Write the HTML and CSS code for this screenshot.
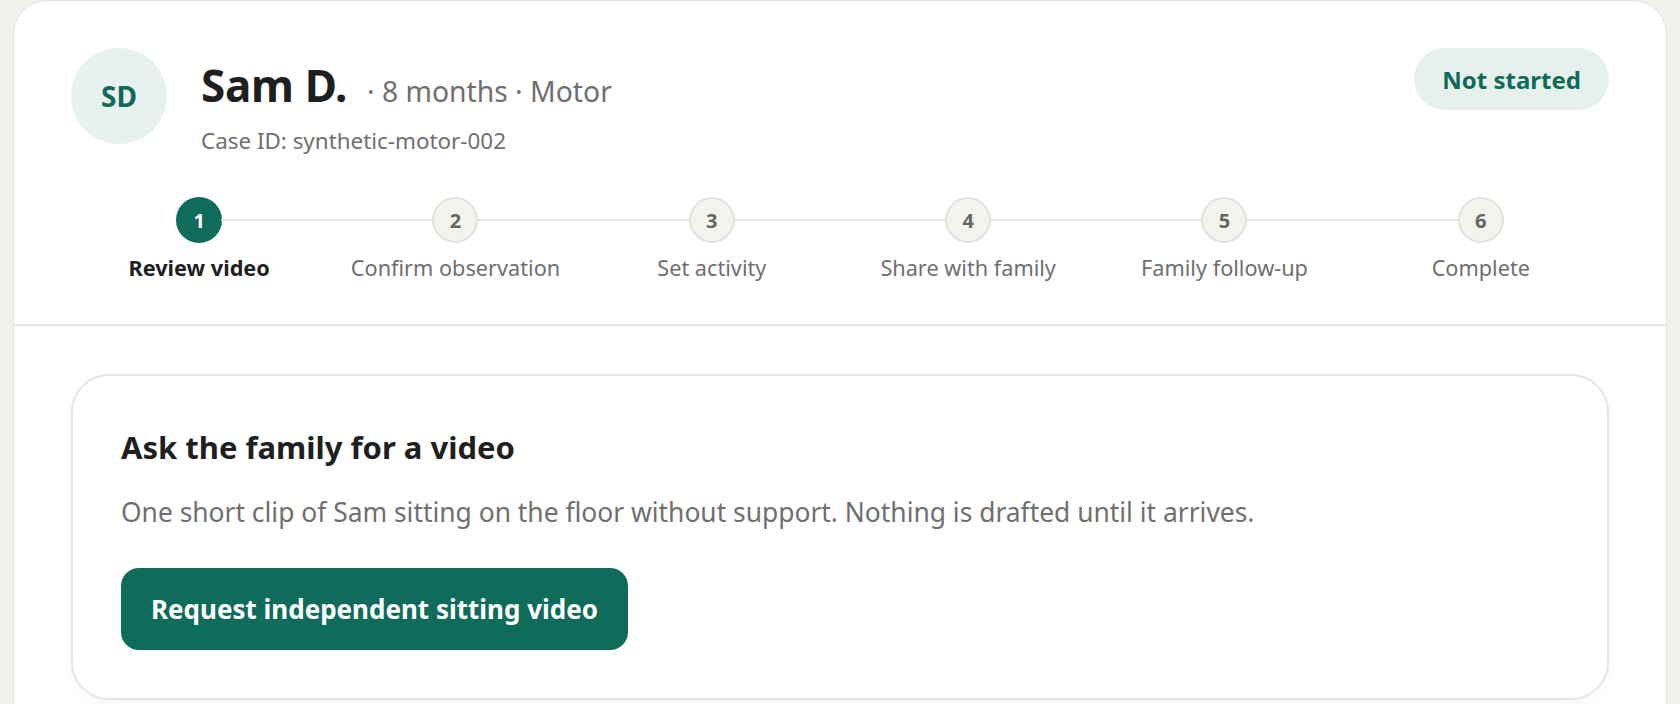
FILE: index.html
```html
<!DOCTYPE html>
<html lang="en">
<head>
  <meta charset="UTF-8">
  <meta name="viewport" content="width=device-width, initial-scale=1.0">
  <title>Sam D. - Case</title>
  <link rel="stylesheet" href="styles.css">
</head>
<body>

<div class="page">
  <div class="case-card">

    <!-- Case header -->
    <div class="case-head">
      <div class="head-row">
        <div class="who">
          <div class="avatar">SD</div>
          <div class="title-block">
            <div class="name-line">
              <h1 class="name">Sam D.</h1>
              <span class="meta">· 8 months · Motor</span>
            </div>
            <div class="case-id">Case ID: synthetic-motor-002</div>
          </div>
        </div>
        <div class="status-pill">Not started</div>
      </div>

      <!-- Steps -->
      <ol class="stepper">
        <li class="step active"><span class="dot">1</span><span class="label">Review video</span></li>
        <li class="step"><span class="dot">2</span><span class="label">Confirm observation</span></li>
        <li class="step"><span class="dot">3</span><span class="label">Set activity</span></li>
        <li class="step"><span class="dot">4</span><span class="label">Share with family</span></li>
        <li class="step"><span class="dot">5</span><span class="label">Family follow-up</span></li>
        <li class="step"><span class="dot">6</span><span class="label">Complete</span></li>
      </ol>
    </div>

    <!-- Current task -->
    <div class="case-body">
      <div class="task-card">
        <h2>Ask the family for a video</h2>
        <p>One short clip of Sam sitting on the floor without support. Nothing is drafted until it arrives.</p>
        <button class="primary">Request independent sitting video</button>
      </div>
    </div>

  </div>
</div>

</body>
</html>
```

FILE: styles.css
```css
body {
  font-family: "Noto Sans", "Open Sans", Arial, sans-serif;
  margin: 0;
  padding: 0;
  background: #f3f1ec;
  color: #1f1f1f;
}

.page {
  padding: 0 13px;
}

.case-card {
  background: #ffffff;
  border: 1px solid #e4e2dd;
  border-radius: 34px 34px 0 0;
  overflow: hidden;
  height: 760px;
}

.case-head {
  padding: 47px 57px 0;
  border-bottom: 2px solid #e8e7e4;
}

.head-row {
  display: flex;
  justify-content: space-between;
  align-items: flex-start;
}

.who {
  display: flex;
  align-items: flex-start;
  gap: 34px;
}

.avatar {
  width: 96px;
  height: 96px;
  border-radius: 50%;
  background: #e7f1ee;
  color: #0f6b57;
  font-size: 28px;
  font-weight: 700;
  display: flex;
  align-items: center;
  justify-content: center;
}

.title-block {
  padding-top: 9px;
}

.name-line {
  display: flex;
  align-items: baseline;
}

.name {
  margin: 0;
  font-size: 44px;
  line-height: 56px;
  font-weight: 700;
  letter-spacing: -0.3px;
  color: #1f1f1f;
}

.meta {
  margin-left: 20px;
  font-size: 28.3px;
  color: #6f6f6f;
}

.case-id {
  margin-top: 13px;
  font-size: 22.4px;
  line-height: 30px;
  color: #6f6f6f;
}

.status-pill {
  height: 62px;
  padding: 0 28px;
  border-radius: 31px;
  background: #e6f0ed;
  color: #0f6b57;
  font-size: 24px;
  font-weight: 700;
  display: flex;
  align-items: center;
}

/* Steps */
.stepper {
  list-style: none;
  margin: 42px 0 0;
  padding: 0 0 42px;
  display: grid;
  grid-template-columns: repeat(6, 1fr);
}

.step {
  position: relative;
  display: flex;
  flex-direction: column;
  align-items: center;
}

.step::after {
  content: "";
  position: absolute;
  top: 21px;
  left: calc(50% + 22px);
  width: calc(100% - 44px);
  height: 2px;
  background: #e4e3e0;
}

.step:last-child::after {
  display: none;
}

.dot {
  width: 46px;
  height: 46px;
  margin-top: -1px;
  box-sizing: border-box;
  border-radius: 50%;
  background: #f3f2ee;
  border: 2px solid #e4e2dd;
  color: #666666;
  font-size: 20px;
  font-weight: 700;
  display: flex;
  align-items: center;
  justify-content: center;
}

.label {
  margin-top: 11px;
  font-size: 21.7px;
  line-height: 28px;
  color: #6f6f6f;
  white-space: nowrap;
}

.step.active .dot {
  background: #0f6b5a;
  border-color: #0f6b5a;
  color: #ffffff;
}

.step.active .label {
  color: #1f1f1f;
  font-weight: 700;
}

/* Task */
.case-body {
  background: #ffffff;
  padding: 48px 57px;
}

.task-card {
  background: #ffffff;
  border: 2px solid #e6e6e5;
  border-radius: 38px;
  box-shadow: 0 3px 12px rgba(0,0,0,0.04);
  padding: 51px 48px 48px;
}

.task-card h2 {
  margin: 0;
  font-size: 31px;
  line-height: 40px;
  font-weight: 700;
  color: #1f1f1f;
}

.task-card p {
  margin: 28px 0 0;
  font-size: 26.4px;
  line-height: 34px;
  color: #6f6f6f;
}

.primary {
  margin-top: 39px;
  padding: 24px 30px 23px;
  font-family: inherit;
  font-size: 26px;
  line-height: 35px;
  font-weight: 700;
  background: #0f6b5a;
  color: #ffffff;
  border: none;
  border-radius: 18px;
  cursor: pointer;
}

.primary:hover {
  background: #0c5f50;
}
```
